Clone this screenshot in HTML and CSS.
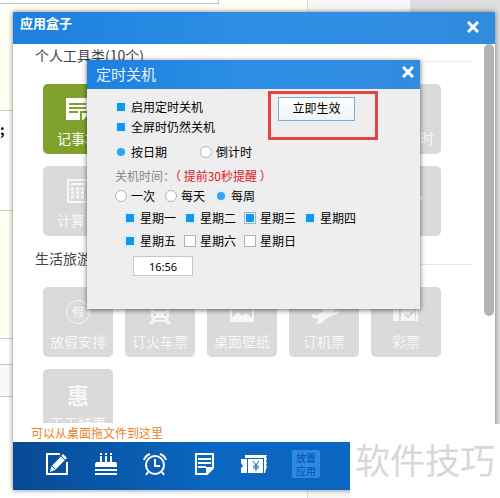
FILE: index.html
```html
<!DOCTYPE html>
<html lang="zh-CN">
<head>
    <meta charset="UTF-8">
    <meta name="viewport" content="width=device-width, initial-scale=1.0">
    <title>应用盒子</title>
    <link rel="stylesheet" href="styles.css">
</head>
<body>
    <!-- page behind the window -->
    <div class="backdrop">
        <div class="strip strip-top"></div>
        <div class="strip strip-side">;</div>
        <div class="strip strip-cream"></div>
        <div class="strip strip-white"></div>
        <div class="strip strip-gray"></div>
        <div class="strip-panel"></div>
        <div class="strip-desk"></div>
    </div>

    <main class="window">
        <header class="window-title">
            <h1>应用盒子</h1>
            <button class="close" aria-label="关闭">
                <svg width="12" height="12" viewBox="0 0 12 12"><path d="M1 1l10 10M11 1l-10 10"/></svg>
            </button>
        </header>

        <div class="apps">
            <h2 class="group-title"><span>个人工具类(10个)</span></h2>
            <div class="tiles">
                <button class="tile active">
                    <svg width="24" height="24" viewBox="0 0 24 24"><path fill="currentColor" d="M0 1h24v15l-7 7H0z"/><path stroke="#80a22c" stroke-width="2" d="M3 7h17M3 11h17M3 15h9M15 23v-8h8"/></svg>
                    记事本
                </button>
                <button class="tile"></button>
                <button class="tile"></button>
                <button class="tile"></button>
                <button class="tile">
                    <svg width="24" height="24" viewBox="0 0 24 24"></svg>
                    整点报时
                </button>
                <button class="tile">
                    <svg width="24" height="24" viewBox="0 0 24 24"><rect x="2" y="1" width="20" height="22" stroke="currentColor" stroke-width="2"/><path stroke="currentColor" stroke-width="2" d="M5 5h14"/><path stroke="currentColor" stroke-width="3" stroke-dasharray="3 2" d="M5 10h14M5 14h14M5 18h14"/></svg>
                    计算器
                </button>
                <button class="tile"></button>
                <button class="tile"></button>
                <button class="tile"></button>
                <button class="tile">
                    <svg width="36" height="24" viewBox="0 0 36 24"><path stroke="currentColor" stroke-width="3" d="M24 10l10 10"/></svg>
                </button>
            </div>

            <h2 class="group-title"><span>生活旅游类(6个)</span></h2>
            <div class="tiles">
                <button class="tile">
                    <span class="round">假</span>
                    放假安排
                </button>
                <button class="tile">
                    <svg width="24" height="24" viewBox="0 0 24 24"><path fill="currentColor" fill-rule="evenodd" d="M5 0h14l2 3v15H3V3zM6 4v7h12V4zM5 13v3h3v-3zM16 13v3h3v-3z"/><path fill="currentColor" d="M5 18h3l-3 6H1zM16 18h3l4 6h-4zM5 20h14v2H5z"/></svg>
                    订火车票
                </button>
                <button class="tile">
                    <svg width="24" height="24" viewBox="0 0 24 24"><rect x="1" y="2" width="22" height="19" stroke="currentColor" stroke-width="2"/><path fill="currentColor" d="M2 21v-4l6-5 4 4 4-3 6 5v3z"/></svg>
                    桌面壁纸
                </button>
                <button class="tile">
                    <svg width="30" height="24" viewBox="0 0 30 24"><path fill="currentColor" d="M2 14l6 1 7-4-8-8 4-1 11 5 5-3c3-1 3 1 1 3l-4 5 6-1v2l-10 4-8 6-5 1 3-5-6-1z"/></svg>
                    订机票
                </button>
                <button class="tile">
                    <svg width="26" height="24" viewBox="0 0 26 24"><path fill="currentColor" d="M5 3h20v4H5zM0 9h6v12H0zM8 9h14v12H8zM23 9h2v12h-2z"/><path stroke="#dadada" stroke-width="2" d="M12 14l3 3 5-5"/></svg>
                    彩票
                </button>
                <button class="tile">
                    <span class="hui">惠</span>
                    天天特惠
                </button>
            </div>
        </div>

        <p class="hint">可以从桌面拖文件到这里</p>

        <footer class="toolbar">
            <button aria-label="编辑">
                <svg width="24" height="24" viewBox="0 0 24 24"><path stroke="#fff" stroke-width="2" d="M15 2H2v20h20V10"/><path fill="#fff" d="M6 15L18 2l4 4L10 18l-5 2z"/><path stroke="#0852a2" d="M7 14l3 3M16 4l4 4"/></svg>
            </button>
            <button aria-label="生日">
                <svg width="24" height="24" viewBox="0 0 24 24"><path stroke="#fff" stroke-width="2" d="M7 1v2M12 1v2M17 1v2M7 4v6M12 4v6M17 4v6"/><path fill="#fff" d="M2 10h20l1 2v3H1v-3zM1 17h22v2H1zM1 21h22v2H1z"/></svg>
            </button>
            <button aria-label="闹钟">
                <svg width="24" height="24" viewBox="0 0 24 24"><circle cx="12" cy="13" r="9" stroke="#fff" stroke-width="2"/><path stroke="#fff" stroke-width="2" d="M12 7v7h5M1 8c1-3 3-5 6-6M23 8c-1-3-3-5-6-6M5 20l-2 3M19 20l2 3"/></svg>
            </button>
            <button aria-label="便签">
                <svg width="24" height="24" viewBox="0 0 24 24"><path stroke="#fff" stroke-width="2" d="M4 2h17v14l-6 6H4z"/><path stroke="#fff" stroke-width="2" d="M6 7h13M6 11h13M6 15h8"/><path fill="#fff" d="M14 15h7l-7 7z"/></svg>
            </button>
            <button aria-label="优惠券">
                <svg width="26" height="24" viewBox="0 0 26 24"><path fill="#fff" d="M4 3h22l-1 2 1 2-1 2 1 2-1 2 1 2-1 2-1 4h-1V6H4zM0 7h6v14H0v-5l2-2-2-3zM7 7h15v14H7z"/><path stroke="#0a5fb8" d="M12 9l3 4 3-4M15 13v6M12 14h6M12 16h6"/></svg>
            </button>
            <button class="drop-app">放置应用</button>
        </footer>

        <section class="dialog">
            <header class="dialog-title">
                <h2>定时关机</h2>
                <button class="close" aria-label="关闭">
                    <svg width="12" height="12" viewBox="0 0 12 12"><path d="M1 1l10 10M11 1l-10 10"/></svg>
                </button>
            </header>
            <form class="dialog-body">
                <div class="switches">
                    <div class="switch-list">
                        <label><input type="checkbox" checked>启用定时关机</label>
                        <label><input type="checkbox" checked>全屏时仍然关机</label>
                    </div>
                    <button type="button" class="apply">立即生效</button>
                    <div class="marker"></div>
                </div>
                <div class="row mode">
                    <label><input type="radio" name="mode" checked>按日期</label>
                    <label><input type="radio" name="mode">倒计时</label>
                </div>
                <p class="row note">关机时间：<em>（ 提前30秒提醒 ）</em></p>
                <div class="row repeat">
                    <label><input type="radio" name="repeat">一次</label>
                    <label><input type="radio" name="repeat">每天</label>
                    <label><input type="radio" name="repeat" checked>每周</label>
                </div>
                <div class="days">
                    <label><input type="checkbox" checked>星期一</label>
                    <label><input type="checkbox" checked>星期二</label>
                    <label><input type="checkbox" class="focus" checked>星期三</label>
                    <label><input type="checkbox" checked>星期四</label>
                    <label><input type="checkbox" checked>星期五</label>
                    <label><input type="checkbox">星期六</label>
                    <label><input type="checkbox">星期日</label>
                </div>
                <input type="text" class="time" value="16:56" aria-label="关机时间">
            </form>
        </section>
    </main>

    <div class="watermark">软件技巧</div>
</body>
</html>
```

FILE: styles.css
```css
* {
    box-sizing: border-box;
}

body {
    margin: 0;
    padding: 12px 5px 8px 13px;
    min-height: 100vh;
    position: relative;
    overflow: hidden;
    background: #fff;
    color: #000;
    font-family: "Noto Sans CJK SC", sans-serif;
    font-size: 12px;
}

h1, h2, p {
    margin: 0;
    font-weight: normal;
}

button {
    font-family: inherit;
    padding: 0;
    border: 0;
    background: none;
    color: inherit;
}

svg {
    display: block;
    fill: none;
}

/* page behind */
.backdrop {
    position: absolute;
    inset: 0;
}

.strip {
    border-bottom: 1px solid #c8c8c8;
}

.strip-top {
    height: 111px;
    background: #fffff3;
}

.strip-top::before {
    content: "";
    display: block;
    width: 218px;
    height: 3px;
    background: #fff;
    border: solid #c4c4cc;
    border-width: 0 1px 1px 0;
}

.strip-side {
    height: 100px;
    padding-top: 8px;
    font-size: 14px;
    font-weight: bold;
}

.strip-cream {
    height: 128px;
    background: #fffff3;
}

.strip-white {
    height: 26px;
}

.strip-gray {
    height: 32px;
    background: #f9f9f9;
}

.strip-panel,
.strip-desk {
    position: absolute;
    top: 0;
    right: 0;
    bottom: 0;
    width: 193px;
    background: #f7f7f8;
    border-left: 1px solid #ddd;
}

.strip-desk {
    width: 90px;
    background: #dedede;
    border: 0;
}

/* main window */
.window {
    position: relative;
    background: #fff;
    box-shadow: 0 0 5px rgba(0, 0, 0, 0.5);
}

.window-title,
.dialog-title {
    display: flex;
    justify-content: space-between;
    background: linear-gradient(to right, #1c80dd, #2d8fe6 50%, #318bde);
    color: #fff;
}

.window-title {
    height: 32px;
    padding: 0 16px 2px 7px;
}

.window-title h1 {
    font-size: 13px;
    line-height: 22px;
    font-weight: bold;
}

.close svg {
    stroke: #fff;
    stroke-width: 3;
}

.apps {
    position: relative;
    height: 379px;
    padding: 2px 22px 0 22px;
    overflow: hidden;
}

/* scrollbar */
.apps::after {
    content: "";
    position: absolute;
    top: 0;
    right: 1px;
    width: 10px;
    height: 272px;
    border-radius: 5px;
    background: #b3b3b3;
}

.group-title {
    display: flex;
    align-items: center;
    height: 22px;
    font-size: 14px;
    line-height: 18px;
    color: #444;
}

.group-title span {
    padding-bottom: 4px;
}

.group-title::after {
    content: "";
    flex: 1;
    margin-top: 8px;
    border-top: 1px solid #e8e8e8;
}

.tiles {
    display: flex;
    flex-wrap: wrap;
    gap: 12px;
    padding: 16px 8px 13px 8px;
}

.tile {
    display: flex;
    flex-direction: column;
    align-items: center;
    width: 70px;
    height: 70px;
    padding-top: 13px;
    border-radius: 5px;
    background: #dadada;
    color: #f7f7f7;
    font-size: 14px;
    line-height: 20px;
    gap: 7px;
}

.tile.active {
    background: #80a22c;
    color: #fff;
}

.round {
    width: 24px;
    height: 24px;
    border: 1px solid #f7f7f7;
    border-radius: 50%;
    font-size: 12px;
    line-height: 21px;
}

.hui {
    height: 24px;
    font-size: 22px;
    font-weight: bold;
    line-height: 24px;
}

.hint {
    height: 19px;
    padding-left: 18px;
    color: #e5841f;
    line-height: 19px;
}

.toolbar {
    display: flex;
    align-items: center;
    gap: 25px;
    height: 48px;
    padding: 0 32px 4px;
    background: linear-gradient(to right, #074a94, #0a66bf 40%, #0a66bf);
}

.toolbar .drop-app {
    width: 28px;
    height: 28px;
    border-radius: 2px;
    background: #2b8ae8;
    color: #0b4f96;
    font-size: 10px;
    line-height: 13px;
}

/* shutdown dialog */
.dialog {
    position: absolute;
    top: 48px;
    left: 74px;
    right: 75px;
    background: #eee;
    box-shadow: 0 1px 5px rgba(0, 0, 0, 0.6);
}

.dialog-title {
    height: 29px;
    padding: 0 6px 5px 9px;
}

.dialog-title h2 {
    font-size: 15px;
    line-height: 27px;
    color: #e3f2ff;
}

.dialog-body {
    height: 220px;
    padding: 8px 20px 0 28px;
}

.dialog-body label {
    display: flex;
    align-items: center;
    gap: 4px;
    line-height: 20px;
    white-space: nowrap;
}

.dialog-body input {
    appearance: none;
    margin: 0;
    border: 1px solid #b4b4b4;
    background: #fff;
}

.dialog-body input[type="checkbox"],
.dialog-body input[type="radio"] {
    flex: none;
    width: 12px;
    height: 12px;
}

.dialog-body input[type="radio"] {
    border-radius: 50%;
}

.dialog-body input[type="checkbox"]:checked {
    border: 2px solid #d9effc;
    background: #1296ee;
}

.dialog-body input.focus:checked {
    border: 1px solid #8cb8d8;
    box-shadow: inset 0 0 0 1px #fff;
}

.dialog-body input[type="radio"]:checked {
    border: 2px solid #dcedf8;
    background: #36a5f0;
}

.switches {
    position: relative;
    display: flex;
    align-items: flex-start;
}

.switch-list {
    width: 163px;
}

.apply {
    width: 77px;
    height: 24px;
    padding-bottom: 4px;
    border: 1px solid #7fadd0;
    background: linear-gradient(#fff, #f0f2f5);
    font-size: 12px;
}

/* red frame around the button */
.marker {
    position: absolute;
    top: -6px;
    left: 153px;
    width: 110px;
    height: 49px;
    border: 3px solid #e34345;
    pointer-events: none;
}

.row {
    display: flex;
    align-items: center;
}

.mode {
    height: 30px;
}

.mode label {
    width: 85px;
}

.note {
    height: 16px;
    margin-bottom: 2px;
    color: #888;
}

.note em {
    margin-left: -6px;
    font-style: normal;
    color: #e01818;
}

.repeat {
    height: 22px;
}

.repeat label {
    width: 50px;
}

.days {
    display: grid;
    grid-template-columns: repeat(4, 60px);
    row-gap: 3px;
    padding: 1px 0 0 9px;
}

.dialog-body .time {
    display: block;
    width: 60px;
    height: 20px;
    margin: 5px 0 0 18px;
    padding: 0;
    border-color: #c8c8c8;
    font: 11px "Noto Sans", sans-serif;
    text-align: center;
}

.watermark {
    position: absolute;
    right: 0;
    bottom: 0;
    width: 150px;
    height: 74px;
    background: #fff;
    color: #d8d8d8;
    font-size: 35px;
    line-height: 70px;
    text-align: center;
    white-space: nowrap;
}
```
